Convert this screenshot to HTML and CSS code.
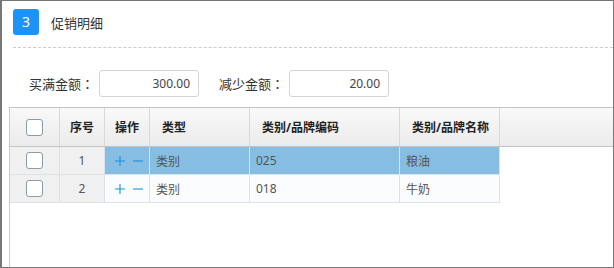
FILE: index.html
```html
<!DOCTYPE html>
<html lang="zh-CN">
<head>
  <meta charset="UTF-8">
  <title>促销明细</title>
  <link rel="stylesheet" href="styles.css">
</head>
<body>
  <div class="panel">
    <div class="panel-title">
      <span class="step">3</span>
      <span class="title-text">促销明细</span>
    </div>

    <div class="form-row">
      <label>买满金额<span class="colon" lang="zh-TW">：</span></label>
      <input type="text" value="300.00">
      <label>减少金额<span class="colon" lang="zh-TW">：</span></label>
      <input type="text" value="20.00">
    </div>

    <div class="grid">
      <div class="grid-head">
        <div class="cell c-check"><span class="checkbox"></span></div>
        <div class="cell c-no center">序号</div>
        <div class="cell c-op center">操作</div>
        <div class="cell c-type">类型</div>
        <div class="cell c-code">类别/品牌编码</div>
        <div class="cell c-name">类别/品牌名称</div>
        <div class="cell c-fill"></div>
      </div>

      <div class="grid-row selected">
        <div class="cell c-check frozen"><span class="checkbox"></span></div>
        <div class="cell c-no frozen center">1</div>
        <div class="cell c-op ops">
          <svg width="10" height="10" viewBox="0 0 10 10"><path d="M0 5H10M5 0V10" /></svg>
          <svg width="10" height="10" viewBox="0 0 10 10"><path d="M0 5H10" /></svg>
        </div>
        <div class="cell c-type">类别</div>
        <div class="cell c-code">025</div>
        <div class="cell c-name">粮油</div>
      </div>

      <div class="grid-row">
        <div class="cell c-check frozen"><span class="checkbox"></span></div>
        <div class="cell c-no frozen center">2</div>
        <div class="cell c-op ops">
          <svg width="10" height="10" viewBox="0 0 10 10"><path d="M0 5H10M5 0V10" /></svg>
          <svg width="10" height="10" viewBox="0 0 10 10"><path d="M0 5H10" /></svg>
        </div>
        <div class="cell c-type">类别</div>
        <div class="cell c-code">018</div>
        <div class="cell c-name">牛奶</div>
      </div>
    </div>
  </div>
</body>
</html>
```

FILE: styles.css
```css
body {
  margin: 0;
  font-family: "Noto Sans", "Noto Sans CJK SC", sans-serif;
  background: #fff;
}

.panel {
  box-sizing: border-box;
  width: 614px;
  height: 268px;
  border: 1px solid #777;
  border-width: 1px 1px 1px 2px;
  display: flex;
  flex-direction: column;
}

.panel-title {
  display: flex;
  align-items: center;
  gap: 12px;
  margin-left: 11px;
  padding: 8px 0 12px;
  border-bottom: 1px dashed #ccc;
}

.step {
  width: 26px;
  height: 26px;
  border-radius: 3px;
  background: #1e93f7;
  color: #fff;
  font-size: 14px;
  line-height: 26px;
  text-align: center;
}

.title-text {
  font-size: 13px;
  color: #333;
}

.form-row {
  display: flex;
  align-items: center;
  padding: 22px 0 0 27px;
  font-size: 13px;
  color: #333;
}

.form-row label {
  font-family: "Noto Sans CJK SC", sans-serif;
  margin-right: 5px;
}

.colon {
  font-family: "Noto Sans CJK TC", sans-serif;
}

.form-row input {
  box-sizing: border-box;
  width: 100px;
  height: 27px;
  margin: 0 20px 0 0;
  padding: 0 8px;
  border: 1px solid #d4d4d4;
  border-radius: 3px;
  font-family: inherit;
  font-size: 12px;
  color: #444;
  text-align: right;
}

.grid {
  flex: 1;
  margin: 10px 0 0 7px;
  border-left: 1px solid #ccc;
  border-top: 1px solid #c4c4c4;
  font-size: 12px;
}

.grid-head {
  display: flex;
  height: 38px;
  background: linear-gradient(#f9f9f9, #ebebeb);
  border-bottom: 1px solid #c4c4c4;
  font-weight: bold;
  color: #222;
}

.grid-head .cell {
  border-right: 1px solid #d9d9d9;
  padding-left: 12px;
}

.grid-row {
  display: flex;
  height: 28px;
  color: #555;
}

.grid-row .cell {
  background: #fafcfe;
  border-right: 1px solid #dde2e8;
  border-bottom: 1px solid #dde2e8;
  padding-left: 6px;
}

.grid-row.selected .cell {
  background: #85bde3;
}

.cell {
  box-sizing: border-box;
  display: flex;
  align-items: center;
}

.grid .center {
  justify-content: center;
  padding-left: 0;
}

.grid-row .frozen,
.grid-row.selected .frozen {
  background: #f0f0f0;
}

.c-check { width: 50px; }
.c-no { width: 45px; }
.c-op { width: 45px; }
.c-type { width: 100px; }
.c-code { width: 150px; }
.c-name { width: 100px; }
.grid-head .c-fill { flex: 1; border-right: none; }

.grid .c-check {
  justify-content: center;
  padding-left: 0;
}

.checkbox {
  box-sizing: border-box;
  width: 17px;
  height: 17px;
  border: 1px solid #8e9aa6;
  border-radius: 3px;
  background: #fff;
}

.grid-row .ops {
  padding-left: 10px;
  gap: 8px;
}

.ops svg path {
  stroke: #1a8ee0;
  stroke-width: 1.1;
  fill: none;
}
```
